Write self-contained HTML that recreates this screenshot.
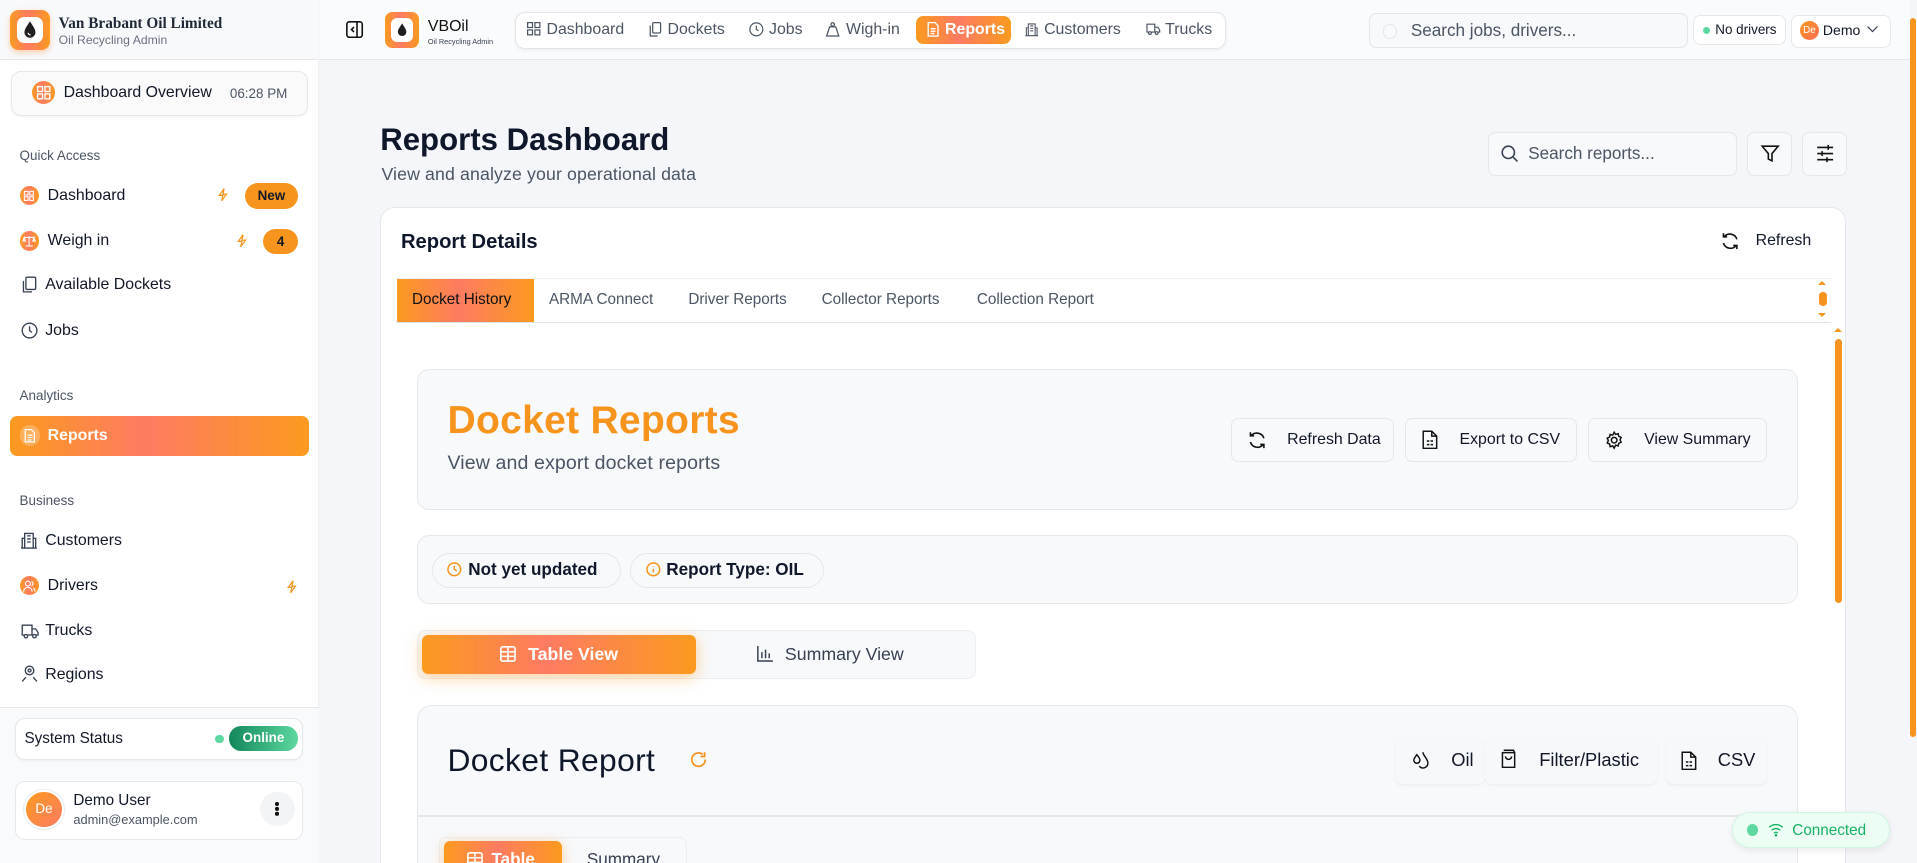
<!DOCTYPE html>
<html><head><meta charset="utf-8">
<style>
*{box-sizing:border-box;margin:0;padding:0}
html,body{width:1917px;height:863px;overflow:hidden;background:#f5f6f9}
#w{zoom:1.22258;width:1568px;height:706px;position:relative;overflow:hidden;font-family:"Liberation Sans",sans-serif;color:#111827;background:#f5f6f9}
.a{position:absolute}
.grad{background:linear-gradient(90deg,#fb9a1f 0%,#fe7b62 45%,#fb9a1f 100%)}
.t{white-space:nowrap}
.btn{position:absolute;background:#f8f9fb;border:1px solid #e5e7eb;border-radius:6px;display:flex;align-items:center;font-size:13px;color:#111827}
svg{overflow:visible}
.nt{position:absolute;top:17px;font-size:13px;color:#4b5563;white-space:nowrap}
.ni{position:absolute;top:18px}
</style></head><body><div id="w">

<!-- sidebar -->
<div class="a" style="left:0;top:0;width:261px;height:706px;background:#fff;border-right:1px solid #eef0f3"></div>
<div class="a" style="left:0;top:0;width:261px;height:49px;background:#f8f9fb;border-bottom:1px solid #e5e7eb"></div>
<div class="a grad" style="left:8px;top:8px;width:33px;height:33px;border-radius:7px;box-shadow:0 2px 5px rgba(251,146,60,.4)"></div>
<div class="a" style="left:14px;top:14px;width:21px;height:21px;background:#fff;border-radius:6px"></div>
<svg class="a" style="left:18px;top:16px" width="13" height="16" viewBox="0 0 13 16"><path d="M6.5 1C4 5 2 7.5 2 10a4.5 4.5 0 0 0 9 0C11 7.5 9 5 6.5 1z" fill="#1f1f1f"/><path d="M5 10.5a1.6 1.6 0 0 0 2 1.5" stroke="#fff" stroke-width="1" fill="none"/></svg>
<div class="a t" style="left:48px;top:12px;font-family:'Liberation Serif',serif;font-weight:bold;font-size:12.5px;color:#1f2937">Van Brabant Oil Limited</div>
<div class="a t" style="left:48px;top:27px;font-size:10px;color:#6b7280">Oil Recycling Admin</div>

<div class="a" style="left:9px;top:58px;width:243px;height:37px;border:1px solid #e5e7eb;border-radius:8px;background:#fafafb;box-shadow:0 1px 2px rgba(0,0,0,.04)"></div>
<div class="a grad" style="left:26px;top:66px;width:19px;height:19px;border-radius:50%"></div>
<svg class="a" style="left:30px;top:70px" width="11" height="11" viewBox="0 0 11 11" fill="none" stroke="#fff" stroke-width="1.1"><rect x=".5" y=".5" width="4" height="4"/><rect x="6.5" y=".5" width="4" height="4"/><rect x=".5" y="6.5" width="4" height="4"/><rect x="6.5" y="6.5" width="4" height="4"/></svg>
<div class="a t" style="left:52px;top:69px;font-size:13px;color:#111827">Dashboard Overview</div>
<div class="a t" style="left:188px;top:70px;font-size:11px;color:#4b5563">06:28 PM</div>

<div class="a t" style="left:16px;top:121px;font-size:11px;color:#4b5563">Quick Access</div>
<div class="a grad" style="left:16px;top:152px;width:16px;height:16px;border-radius:50%"></div>
<svg class="a" style="left:20px;top:156px" width="8" height="8" viewBox="0 0 8 8" fill="none" stroke="#fff" stroke-width=".9"><rect x=".3" y=".3" width="3" height="3"/><rect x="4.7" y=".3" width="3" height="3"/><rect x=".3" y="4.7" width="3" height="3"/><rect x="4.7" y="4.7" width="3" height="3"/></svg>
<div class="a t" style="left:39px;top:153px;font-size:13px">Dashboard</div>
<svg class="a" style="left:178px;top:154px" width="8" height="11" viewBox="0 0 8 11" fill="none" stroke="#f7941d" stroke-width="1"><path d="M5 .5L1 6h3l-1 4.5L7 5H4z"/></svg>
<div class="a" style="left:200px;top:150px;width:44px;height:21px;border-radius:11px;background:#f7941d;font-size:11px;font-weight:bold;text-align:center;line-height:21px">New</div>
<div class="a grad" style="left:16px;top:189px;width:16px;height:16px;border-radius:50%"></div>
<svg class="a" style="left:19px;top:192px" width="10" height="10" viewBox="0 0 10 10" fill="none" stroke="#fff" stroke-width=".9"><path d="M5 1v8M2 9h6M1 2h8M1 2L0 5h2zM9 2l-1 3h2z"/></svg>
<div class="a t" style="left:39px;top:190px;font-size:13px">Weigh in</div>
<svg class="a" style="left:194px;top:191px" width="8" height="11" viewBox="0 0 8 11" fill="none" stroke="#f7941d" stroke-width="1"><path d="M5 .5L1 6h3l-1 4.5L7 5H4z"/></svg>
<div class="a" style="left:215px;top:187px;width:29px;height:21px;border-radius:11px;background:#f7941d;font-size:11px;font-weight:bold;text-align:center;line-height:21px">4</div>
<svg class="a" style="left:17px;top:226px" width="13" height="15" viewBox="0 0 13 15" fill="none" stroke="#374151" stroke-width="1.1"><rect x="4" y="1" width="8" height="10" rx="1"/><path d="M2 4v9h7"/></svg>
<div class="a t" style="left:37px;top:226px;font-size:13px">Available Dockets</div>
<svg class="a" style="left:17px;top:263px" width="14" height="14" viewBox="0 0 14 14" fill="none" stroke="#374151" stroke-width="1.1"><circle cx="7" cy="7" r="6"/><path d="M7 3.5V7l2 1.5"/></svg>
<div class="a t" style="left:37px;top:263px;font-size:13px">Jobs</div>

<div class="a t" style="left:16px;top:317px;font-size:11px;color:#4b5563">Analytics</div>
<div class="a grad" style="left:8px;top:340px;width:245px;height:33px;border-radius:6px"></div>
<div class="a" style="left:16px;top:348px;width:17px;height:17px;border-radius:50%;background:rgba(255,255,255,.25)"></div>
<svg class="a" style="left:20px;top:351px" width="9" height="11" viewBox="0 0 9 11" fill="none" stroke="#fff" stroke-width="1"><path d="M1 .5h5l2.5 2.5v7.5H1z M3 5h4M3 7h4M3 9h3"/></svg>
<div class="a t" style="left:39px;top:349px;font-size:13px;color:#fff;font-weight:bold">Reports</div>

<div class="a t" style="left:16px;top:403px;font-size:11px;color:#4b5563">Business</div>
<svg class="a" style="left:17px;top:434px" width="13" height="15" viewBox="0 0 13 15" fill="none" stroke="#374151" stroke-width="1.1"><path d="M3 14V2h7v12M1 14V6h2M10 6h2v8M0 14h13M5 4h3M5 6.5h3M5 9h3"/></svg>
<div class="a t" style="left:37px;top:435px;font-size:13px">Customers</div>
<div class="a grad" style="left:16px;top:471px;width:16px;height:16px;border-radius:50%"></div>
<svg class="a" style="left:19px;top:474px" width="10" height="10" viewBox="0 0 10 10" fill="none" stroke="#fff" stroke-width=".9"><circle cx="4" cy="3" r="2"/><path d="M0.5 9.5a3.5 3.5 0 0 1 7 0M7 1.2a2 2 0 0 1 0 3.6M8.5 6.5a3 3 0 0 1 1.2 3"/></svg>
<div class="a t" style="left:39px;top:472px;font-size:13px">Drivers</div>
<svg class="a" style="left:235px;top:474px" width="8" height="11" viewBox="0 0 8 11" fill="none" stroke="#f7941d" stroke-width="1"><path d="M5 .5L1 6h3l-1 4.5L7 5H4z"/></svg>
<svg class="a" style="left:17px;top:510px" width="15" height="12" viewBox="0 0 15 12" fill="none" stroke="#374151" stroke-width="1.1"><path d="M1 1h8v8H1zM9 4h3l2 3v2H9"/><circle cx="4" cy="10" r="1.4" fill="#fff"/><circle cx="11" cy="10" r="1.4" fill="#fff"/></svg>
<div class="a t" style="left:37px;top:509px;font-size:13px">Trucks</div>
<svg class="a" style="left:17px;top:544px" width="14" height="14" viewBox="0 0 14 14" fill="none" stroke="#374151" stroke-width="1.1"><circle cx="7" cy="4.5" r="3.5"/><circle cx="7" cy="4.5" r="1.2"/><path d="M4 10l-3 3.5M10 10l3 3.5"/></svg>
<div class="a t" style="left:37px;top:545px;font-size:13px">Regions</div>

<div class="a" style="left:0;top:578px;width:261px;height:128px;background:#f9fafb;border-top:1px solid #e5e7eb"></div>
<div class="a" style="left:12px;top:587px;width:236px;height:35px;background:#fff;border:1px solid #e5e7eb;border-radius:8px;box-shadow:0 1px 2px rgba(0,0,0,.04)"></div>
<div class="a t" style="left:20px;top:597px;font-size:12.5px">System Status</div>
<div class="a" style="left:176px;top:601px;width:7px;height:7px;border-radius:50%;background:#5dd8a0"></div>
<div class="a" style="left:187px;top:594px;width:57px;height:20px;border-radius:10px;background:linear-gradient(90deg,#12875a,#5dd8a0);color:#fff;font-size:11px;font-weight:bold;text-align:center;line-height:20px">Online</div>
<div class="a" style="left:12px;top:639px;width:236px;height:48px;background:#fff;border:1px solid #e5e7eb;border-radius:8px"></div>
<div class="a" style="left:20px;top:646px;width:32px;height:32px;border-radius:50%;border:2px solid #fff;box-shadow:0 0 0 1px #eee;color:#fff;font-size:11px;text-align:center;line-height:28px;background:linear-gradient(135deg,#fb9a1f,#fe7b62)">De</div>
<div class="a t" style="left:60px;top:648px;font-size:12.5px">Demo User</div>
<div class="a t" style="left:60px;top:664px;font-size:10.5px;color:#4b5563">admin@example.com</div>
<div class="a" style="left:213px;top:648px;width:28px;height:28px;border-radius:50%;background:#f3f4f6"></div>
<div class="a" style="left:225px;top:656px;width:3px;height:3px;border-radius:50%;background:#111;box-shadow:0 4px 0 #111,0 8px 0 #111"></div>

<!-- topbar -->
<div class="a" style="left:262px;top:0;width:1300px;height:49px;background:#fafbfc;border-bottom:1px solid #e2e5ea"></div>
<svg class="a" style="left:283px;top:17px" width="14" height="14" viewBox="0 0 14 14" fill="none" stroke="#111" stroke-width="1.3"><rect x=".7" y=".7" width="12.6" height="12.6" rx="2"/><path d="M9 1v12M6.5 5L4.5 7l2 2"/></svg>
<div class="a grad" style="left:315px;top:10px;width:28px;height:29px;border-radius:6px"></div>
<div class="a" style="left:320px;top:15px;width:18px;height:19px;background:#fff;border-radius:5px"></div>
<svg class="a" style="left:324px;top:18px" width="10" height="13" viewBox="0 0 13 16"><path d="M6.5 1C4 5 2 7.5 2 10a4.5 4.5 0 0 0 9 0C11 7.5 9 5 6.5 1z" fill="#1f1f1f"/></svg>
<div class="a t" style="left:350px;top:15px;font-size:13px;color:#111">VBOil</div>
<div class="a t" style="left:350px;top:30px;font-size:6px;color:#374151">Oil Recycling Admin</div>
<div class="a" style="left:421px;top:10px;width:582px;height:30px;background:#fff;border:1px solid #e2e5ea;border-radius:8px;box-shadow:0 1px 3px rgba(0,0,0,.05)"></div>
<div class="a grad" style="left:749px;top:13px;width:78px;height:23px;border-radius:6px"></div>
<svg class="ni" style="left:431px" width="11" height="11" viewBox="0 0 11 11" fill="none" stroke="#4b5563" stroke-width="1"><rect x=".5" y=".5" width="4" height="4"/><rect x="6.5" y=".5" width="4" height="4"/><rect x=".5" y="6.5" width="4" height="4"/><rect x="6.5" y="6.5" width="4" height="4"/></svg>
<div class="nt" style="left:447px">Dashboard</div>
<svg class="ni" style="left:531px" width="10" height="12" viewBox="0 0 10 12" fill="none" stroke="#4b5563" stroke-width="1"><rect x="3" y=".5" width="6.5" height="8.5" rx="1"/><path d="M1 3v8.5h6"/></svg>
<div class="nt" style="left:546px">Dockets</div>
<svg class="ni" style="left:613px" width="12" height="12" viewBox="0 0 12 12" fill="none" stroke="#4b5563" stroke-width="1"><circle cx="6" cy="6" r="5.3"/><path d="M6 3v3l1.8 1.2"/></svg>
<div class="nt" style="left:629px">Jobs</div>
<svg class="ni" style="left:676px" width="11" height="12" viewBox="0 0 11 12" fill="none" stroke="#4b5563" stroke-width="1"><circle cx="5.5" cy="2" r="1.4"/><path d="M3 4h5l2.5 7.5H.5z"/></svg>
<div class="nt" style="left:692px">Wigh-in</div>
<svg class="ni" style="left:758px" width="10" height="12" viewBox="0 0 10 12" fill="none" stroke="#fff" stroke-width="1.1"><path d="M1 .5h5.5l2.5 2.5v8.5H1zM3 5.5h4M3 7.5h4M3 9.5h3"/></svg>
<div class="nt" style="left:773px;color:#fff;font-weight:bold">Reports</div>
<svg class="ni" style="left:838px" width="11" height="12" viewBox="0 0 13 15" fill="none" stroke="#4b5563" stroke-width="1.1"><path d="M3 14V2h7v12M1 14V6h2M10 6h2v8M0 14h13M5 4h3M5 6.5h3M5 9h3"/></svg>
<div class="nt" style="left:854px">Customers</div>
<svg class="ni" style="left:937px;top:19px" width="12" height="10" viewBox="0 0 15 12" fill="none" stroke="#4b5563" stroke-width="1.2"><path d="M1 1h8v8H1zM9 4h3l2 3v2H9"/><circle cx="4" cy="10" r="1.4" fill="#fff"/><circle cx="11" cy="10" r="1.4" fill="#fff"/></svg>
<div class="nt" style="left:953px">Trucks</div>

<div class="a" style="left:1120px;top:11px;width:261px;height:28px;background:#f8f9fb;border:1px solid #e2e5ea;border-radius:6px"></div>
<div class="a" style="left:1131px;top:20px;width:12px;height:12px;border-radius:50%;border:1.5px solid #e5e7eb"></div>
<div class="a t" style="left:1154px;top:17px;font-size:14px;color:#4b5563">Search jobs, drivers...</div>
<div class="a" style="left:1385px;top:12px;width:76px;height:25px;background:#fff;border:1px solid #e5e7eb;border-radius:6px"></div>
<div class="a" style="left:1393px;top:22px;width:6px;height:6px;border-radius:50%;background:#5dd8a0"></div>
<div class="a t" style="left:1403px;top:18px;font-size:11px">No drivers</div>
<div class="a" style="left:1465px;top:12px;width:82px;height:27px;background:#fff;border:1px solid #e5e7eb;border-radius:6px"></div>
<div class="a" style="left:1472px;top:17px;width:16px;height:16px;border-radius:50%;background:linear-gradient(135deg,#fb9a1f,#fe6b52);color:#fff;font-size:8px;line-height:16px;text-align:center">De</div>
<div class="a t" style="left:1491px;top:18px;font-size:11.5px">Demo</div>
<svg class="a" style="left:1527px;top:21px" width="9" height="6" viewBox="0 0 9 6" fill="none" stroke="#374151" stroke-width="1"><path d="M.5.5l4 4 4-4"/></svg>
<div class="a" style="left:1562px;top:15px;width:5px;height:588px;border-radius:3px;background:#f7941d"></div>

<!-- header -->
<div class="a t" style="left:311px;top:100px;font-size:25.5px;font-weight:bold;color:#0f172a;letter-spacing:0">Reports Dashboard</div>
<div class="a t" style="left:312px;top:134px;font-size:14.5px;color:#4b5563;letter-spacing:.1px">View and analyze your operational data</div>
<div class="a" style="left:1217px;top:108px;width:204px;height:36px;background:#f8f9fb;border:1px solid #e5e7eb;border-radius:6px"></div>
<svg class="a" style="left:1228px;top:119px" width="14" height="14" viewBox="0 0 14 14" fill="none" stroke="#374151" stroke-width="1.3"><circle cx="6" cy="6" r="5"/><path d="M10 10l3.5 3.5"/></svg>
<div class="a t" style="left:1250px;top:118px;font-size:14px;color:#4b5563">Search reports...</div>
<div class="a" style="left:1429px;top:108px;width:37px;height:36px;background:#f8f9fb;border:1px solid #e5e7eb;border-radius:6px"></div>
<svg class="a" style="left:1440px;top:119px" width="15" height="14" viewBox="0 0 15 14" fill="none" stroke="#111" stroke-width="1.3"><path d="M1 1h13L9 7v6L6 11.5V7z"/></svg>
<div class="a" style="left:1474px;top:108px;width:37px;height:36px;background:#f8f9fb;border:1px solid #e5e7eb;border-radius:6px"></div>
<svg class="a" style="left:1485px;top:119px" width="15" height="14" viewBox="0 0 15 14" fill="none" stroke="#111" stroke-width="1.3"><path d="M1 2h13M1 7h13M1 12h13M10 0v4M5 5v4M9 10v4"/></svg>

<!-- main card -->
<div class="a" style="left:311px;top:169px;width:1199px;height:560px;background:#fff;border:1px solid #e5e7eb;border-radius:12px"></div>
<div class="a t" style="left:328px;top:189px;font-size:16.5px;font-weight:bold;color:#0f172a">Report Details</div>
<svg class="a" style="left:1408px;top:190px" width="15" height="15" viewBox="0 0 15 15" fill="none" stroke="#111" stroke-width="1.3"><path d="M13 6A6 6 0 0 0 2.5 4M2 1v3h3M2 9a6 6 0 0 0 10.5 2M13 14v-3h-3"/></svg>
<div class="a t" style="left:1436px;top:190px;font-size:13px">Refresh</div>
<div class="a" style="left:324px;top:227px;width:1174px;height:37px;border-top:1px solid #f0f1f3;border-bottom:1px solid #dfe2e7"></div>
<div class="a grad" style="left:325px;top:228px;width:112px;height:35px"></div>
<div class="a t" style="left:337px;top:238px;font-size:12.5px;color:#111">Docket History</div>
<div class="a t" style="left:449px;top:238px;font-size:12.5px;color:#4b5563">ARMA Connect</div>
<div class="a t" style="left:563px;top:238px;font-size:12.5px;color:#4b5563">Driver Reports</div>
<div class="a t" style="left:672px;top:238px;font-size:12.5px;color:#4b5563">Collector Reports</div>
<div class="a t" style="left:799px;top:238px;font-size:12.5px;color:#4b5563">Collection Report</div>
<div class="a" style="left:1488px;top:239px;width:6px;height:11px;border-radius:3px;background:#f7941d"></div>
<div class="a" style="left:1487px;top:230px;width:0;height:0;border:4px solid transparent;border-bottom-color:#f7941d;border-top:0"></div>
<div class="a" style="left:1487px;top:256px;width:0;height:0;border:4px solid transparent;border-top-color:#f7941d;border-bottom:0"></div>
<div class="a" style="left:1500px;top:268px;width:0;height:0;border:4px solid transparent;border-bottom-color:#f7941d;border-top:0"></div>
<div class="a" style="left:1501px;top:277px;width:6px;height:216px;border-radius:3px;background:#f7941d"></div>

<!-- Docket Reports card -->
<div class="a" style="left:341px;top:302px;width:1130px;height:115px;background:#f8f9fb;border:1px solid #e5e7eb;border-radius:10px"></div>
<div class="a t" style="left:366px;top:326px;font-size:32px;font-weight:bold;color:#f7941d;letter-spacing:.2px">Docket Reports</div>
<div class="a t" style="left:366px;top:370px;font-size:16px;color:#4b5563;letter-spacing:.1px">View and export docket reports</div>
<div class="btn" style="left:1007px;top:342px;width:133px;height:36px"><svg style="margin-left:13px" width="15" height="15" viewBox="0 0 15 15" fill="none" stroke="#111" stroke-width="1.3"><path d="M13 6A6 6 0 0 0 2.5 4M2 1v3h3M2 9a6 6 0 0 0 10.5 2M13 14v-3h-3"/></svg><span style="margin-left:17px">Refresh Data</span></div>
<div class="btn" style="left:1149px;top:342px;width:141px;height:36px"><svg style="margin-left:13px" width="13" height="16" viewBox="0 0 13 16" fill="none" stroke="#111" stroke-width="1.2"><path d="M1 1h7l4 4v10H1zM8 1v4h4M4 9h2M7 9h2M4 12h2M7 12h2"/></svg><span style="margin-left:18px">Export to CSV</span></div>
<div class="btn" style="left:1299px;top:342px;width:146px;height:36px"><svg style="margin-left:13px" width="15" height="15" viewBox="0 0 15 15" fill="none" stroke="#111" stroke-width="1.2"><circle cx="7.5" cy="7.5" r="2.3"/><path d="M7.5 1l1.2 1.8 2.1-.6.4 2.1 2 .9-.9 2 .9 2-2 .9-.4 2.1-2.1-.6L7.5 14l-1.2-1.8-2.1.6-.4-2.1-2-.9.9-2-.9-2 2-.9.4-2.1 2.1.6z"/></svg><span style="margin-left:17px">View Summary</span></div>

<!-- status -->
<div class="a" style="left:341px;top:438px;width:1130px;height:56px;background:#f8f9fb;border:1px solid #e5e7eb;border-radius:10px"></div>
<div class="a" style="left:353px;top:452px;width:155px;height:29px;border:1px solid #e5e7eb;border-radius:15px;background:#f8f9fb"></div>
<svg class="a" style="left:366px;top:460px" width="12" height="12" viewBox="0 0 12 12" fill="none" stroke="#f7941d" stroke-width="1.2"><circle cx="6" cy="6" r="5.2"/><path d="M6 3v3l2 1.2"/></svg>
<div class="a t" style="left:383px;top:458px;font-size:14px;font-weight:bold;color:#0f172a">Not yet updated</div>
<div class="a" style="left:515px;top:452px;width:159px;height:29px;border:1px solid #e5e7eb;border-radius:15px;background:#f8f9fb"></div>
<svg class="a" style="left:528px;top:460px" width="12" height="12" viewBox="0 0 12 12" fill="none" stroke="#f7941d" stroke-width="1.2"><circle cx="6" cy="6" r="5.2"/><path d="M6 5.5v3M6 3.5v.4"/></svg>
<div class="a t" style="left:545px;top:458px;font-size:14px;font-weight:bold;color:#0f172a">Report Type: OIL</div>

<!-- toggle -->
<div class="a" style="left:341px;top:515px;width:457px;height:40px;background:#f8f9fb;border:1px solid #eceef1;border-radius:7px"></div>
<div class="a grad" style="left:345px;top:519px;width:224px;height:32px;border-radius:5px;box-shadow:0 3px 12px rgba(251,170,60,.5)"></div>
<svg class="a" style="left:409px;top:528px" width="13" height="13" viewBox="0 0 13 13" fill="none" stroke="#fff" stroke-width="1.3"><rect x=".7" y=".7" width="11.6" height="11.6" rx="1.5"/><path d="M.7 4.7h11.6M.7 8.5h11.6M6.5.7v11.6"/></svg>
<div class="a t" style="left:432px;top:527px;font-size:14.5px;color:#fff;font-weight:bold">Table View</div>
<svg class="a" style="left:619px;top:528px" width="13" height="13" viewBox="0 0 13 13" fill="none" stroke="#374151" stroke-width="1.2"><path d="M.7 0v12.3H13M4 5v5M7 3v7M10 6v4"/></svg>
<div class="a t" style="left:642px;top:527px;font-size:14.5px;color:#374151">Summary View</div>

<!-- Docket Report card -->
<div class="a" style="left:341px;top:577px;width:1130px;height:160px;background:#f8f9fb;border:1px solid #e5e7eb;border-radius:12px"></div>
<div class="a t" style="left:366px;top:607px;font-size:26px;color:#0f172a;letter-spacing:.3px">Docket Report</div>
<svg class="a" style="left:564px;top:614px" width="14" height="14" viewBox="0 0 14 14" fill="none" stroke="#f7941d" stroke-width="1.4"><path d="M12.5 7A5.5 5.5 0 1 1 10.5 2.8M12 1v3.5H8.5"/></svg>
<div class="a" style="left:1141px;top:603px;width:74px;height:38px;background:#f7f8fa;border-radius:6px;box-shadow:0 1px 2px rgba(0,0,0,.05)"></div>
<svg class="a" style="left:1155px;top:614px" width="14" height="16" viewBox="0 0 14 16" fill="none" stroke="#111" stroke-width="1.2"><path d="M4 3C2.5 5 1.5 6 1.5 7.5a2.5 2.5 0 0 0 5 0C6.5 6 5.5 5 4 3zM9 1c0 3 4 5 4 9a4 4 0 0 1-7 2.5"/></svg>
<div class="a t" style="left:1187px;top:613px;font-size:15px">Oil</div>
<div class="a" style="left:1215px;top:603px;width:141px;height:38px;background:#f7f8fa;border-radius:6px;box-shadow:0 1px 2px rgba(0,0,0,.05)"></div>
<svg class="a" style="left:1227px;top:613px" width="14" height="16" viewBox="0 0 14 16" fill="none" stroke="#111" stroke-width="1.2"><path d="M2 3h10v12H2zM3 1h8l1 2M4.5 6a2.5 2.5 0 0 0 5 0"/></svg>
<div class="a t" style="left:1259px;top:613px;font-size:15px">Filter/Plastic</div>
<div class="a" style="left:1363px;top:603px;width:82px;height:38px;background:#f7f8fa;border-radius:6px;box-shadow:0 1px 2px rgba(0,0,0,.05)"></div>
<svg class="a" style="left:1375px;top:614px" width="13" height="16" viewBox="0 0 13 16" fill="none" stroke="#111" stroke-width="1.2"><path d="M1 1h7l4 4v10H1zM8 1v4h4M4 9h2M7 9h2M4 12h2M7 12h2"/></svg>
<div class="a t" style="left:1405px;top:613px;font-size:15px">CSV</div>
<div class="a" style="left:342px;top:667px;width:1128px;height:1px;background:#e5e7eb"></div>
<div class="a" style="left:359px;top:685px;width:203px;height:40px;background:#f8f9fb;border:1px solid #eceef1;border-radius:6px"></div>
<div class="a grad" style="left:363px;top:688px;width:97px;height:30px;border-radius:5px;box-shadow:0 2px 10px rgba(251,170,60,.5)"></div>
<svg class="a" style="left:382px;top:697px" width="13" height="13" viewBox="0 0 13 13" fill="none" stroke="#fff" stroke-width="1.3"><rect x=".7" y=".7" width="11.6" height="11.6" rx="1.5"/><path d="M.7 4.7h11.6M.7 8.5h11.6M6.5.7v11.6"/></svg>
<div class="a t" style="left:402px;top:695px;font-size:14px;color:#fff;font-weight:bold">Table</div>
<div class="a t" style="left:480px;top:695px;font-size:14px;color:#374151">Summary</div>

<!-- connected -->
<div class="a" style="left:1417px;top:664px;width:129px;height:30px;background:#ecfdf4;border:1px solid #d1f5e2;border-radius:15px;box-shadow:0 2px 6px rgba(0,0,0,.08)"></div>
<div class="a" style="left:1429px;top:674px;width:9px;height:10px;border-radius:50%;background:#5dd8a0"></div>
<svg class="a" style="left:1446px;top:673px" width="13" height="11" viewBox="0 0 13 11" fill="none" stroke="#16b364" stroke-width="1.1"><path d="M1 3.5a8 8 0 0 1 11 0M3 6a5 5 0 0 1 7 0M5 8.3a2 2 0 0 1 3 0"/><circle cx="6.5" cy="10" r=".5" fill="#16b364"/></svg>
<div class="a t" style="left:1466px;top:672px;font-size:12.5px;color:#16b364">Connected</div>

</div></body></html>
